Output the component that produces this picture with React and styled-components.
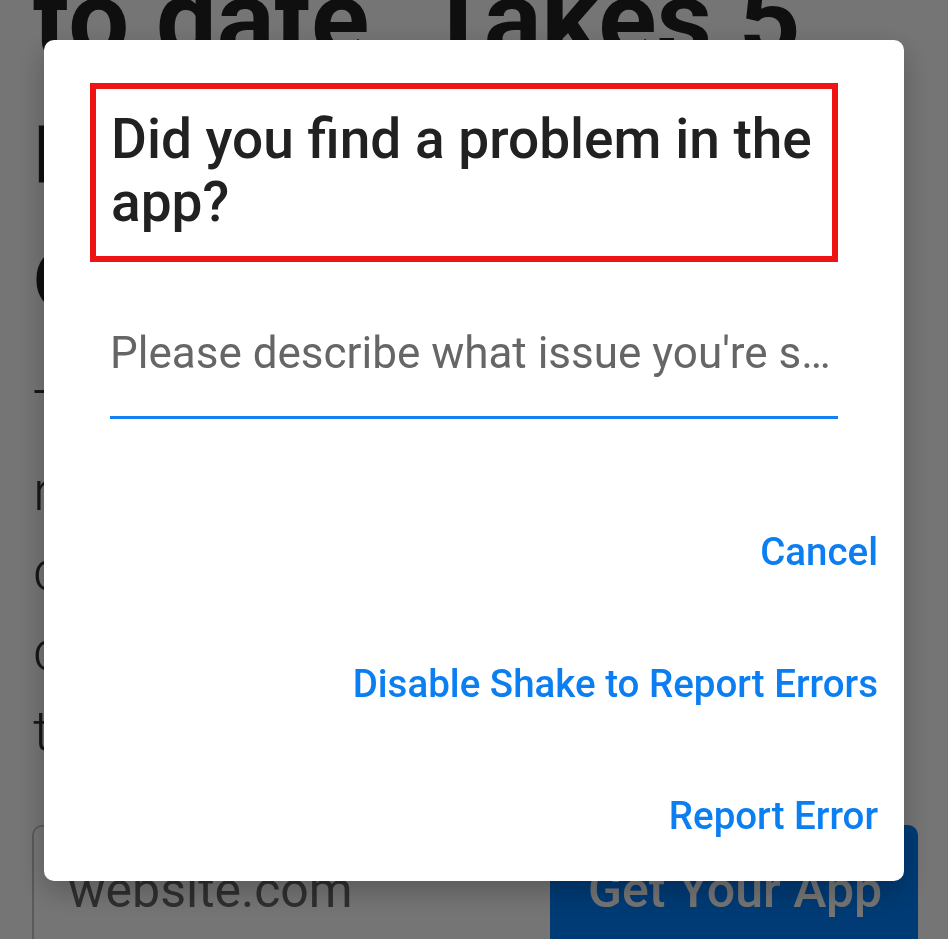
import React from "react"
import styled, { createGlobalStyle } from "styled-components"

const GlobalStyle = createGlobalStyle`
  html, body {
    margin: 0;
    height: 100%;
    overflow: hidden;
    background: #fff;
    font-family: Roboto, "Liberation Sans", Arial, sans-serif;
  }
  * {
    box-sizing: border-box;
  }
`

// page that sits behind the dimmed overlay
const Page = styled.main`
  padding: 0 30px 0 33px;
  color: #222;
`

const Heading = styled.h1`
  margin: -44px 0 0;
  font-size: 108px;
  font-weight: 700;
  line-height: 126px;
  white-space: nowrap;
`

const Line = styled.span`
  display: block;
`

const Lead = styled.p`
  margin: 37px 0 0;
  font-size: 56px;
  font-weight: 300;
  line-height: 80px;
  color: #333;
  white-space: nowrap;
`

const SignupRow = styled.form`
  display: flex;
  margin: 54px 0 0 -1px;
  height: 130px;
  width: 886px;
`

const UrlInput = styled.input`
  width: 518px;
  border: 2px solid #c4c4c4;
  border-right: none;
  border-radius: 10px 0 0 10px;
  padding: 0 0 0 34px;
  font: 400 50px Roboto, "Liberation Sans", sans-serif;
  color: #666;
  background: #fff;
  outline: none;

  &::placeholder {
    color: #666;
  }
`

const GetButton = styled.button`
  flex: 1;
  border: none;
  border-radius: 0 10px 10px 0;
  background: #0080ff;
  color: #fff;
  font: 500 50px Roboto, "Liberation Sans", sans-serif;
  text-align: left;
  padding: 0 0 0 38px;
`

// dialog
const Overlay = styled.div`
  position: fixed;
  inset: 0;
  display: flex;
  align-items: flex-start;
  padding: 40px 44px;
  background: rgba(0, 0, 0, 0.54);
`

const Dialog = styled.div`
  width: 860px;
  display: flex;
  flex-direction: column;
  padding-top: 43px;
  background: #fff;
  border-radius: 10px;
  box-shadow: 0 10px 30px rgba(0, 0, 0, 0.25);
  overflow: hidden;
`

const Title = styled.h2`
  margin: 0 66px 0 46px;
  border: 6px solid #ee1414;
  padding: 19px 4px 22px 15px;
  font-size: 55px;
  font-weight: 500;
  line-height: 63px;
  color: #212121;
`

const Field = styled.input`
  display: block;
  margin: 65px 66px 0;
  height: 92px;
  padding: 0 0 37px;
  border: none;
  border-bottom: 3px solid #1580f2;
  font: 400 44px/52px Roboto, "Liberation Sans", sans-serif;
  color: #212121;
  background: transparent;
  outline: none;
  text-overflow: ellipsis;

  &::placeholder {
    color: #666;
  }
`

const Actions = styled.div`
  display: flex;
  flex-direction: column;
  align-items: flex-end;
  margin-top: 66px;
`

const ActionButton = styled.button`
  height: 132px;
  padding: 0 26px 0 20px;
  border: none;
  background: none;
  font: 500 38.5px Roboto, "Liberation Sans", sans-serif;
  color: #0b7ef2;
  cursor: pointer;
`

const actions = ["Cancel", "Disable Shake to Report Errors", "Report Error"]

const App = () => {
  return (
    <>
      <GlobalStyle />
      <Page>
        <Heading>
          <Line>to date. Takes 5</Line>
          <Line>minutes.</Line>
          <Line>completely free</Line>
        </Heading>
        <Lead>
          <Line>The best way to</Line>
          <Line>reach your</Line>
          <Line>customers and</Line>
          <Line>clients is on</Line>
          <Line>their phones.</Line>
        </Lead>
        <SignupRow onSubmit={(e) => e.preventDefault()}>
          <UrlInput placeholder="website.com" />
          <GetButton type="submit">Get Your App</GetButton>
        </SignupRow>
      </Page>
      <Overlay>
        <Dialog role="dialog">
          <Title>Did you find a problem in the app?</Title>
          <Field placeholder="Please describe what issue you're seeing in the app" />
          <Actions>
            {actions.map((label) => (
              <ActionButton key={label}>{label}</ActionButton>
            ))}
          </Actions>
        </Dialog>
      </Overlay>
    </>
  )
}

export default App
